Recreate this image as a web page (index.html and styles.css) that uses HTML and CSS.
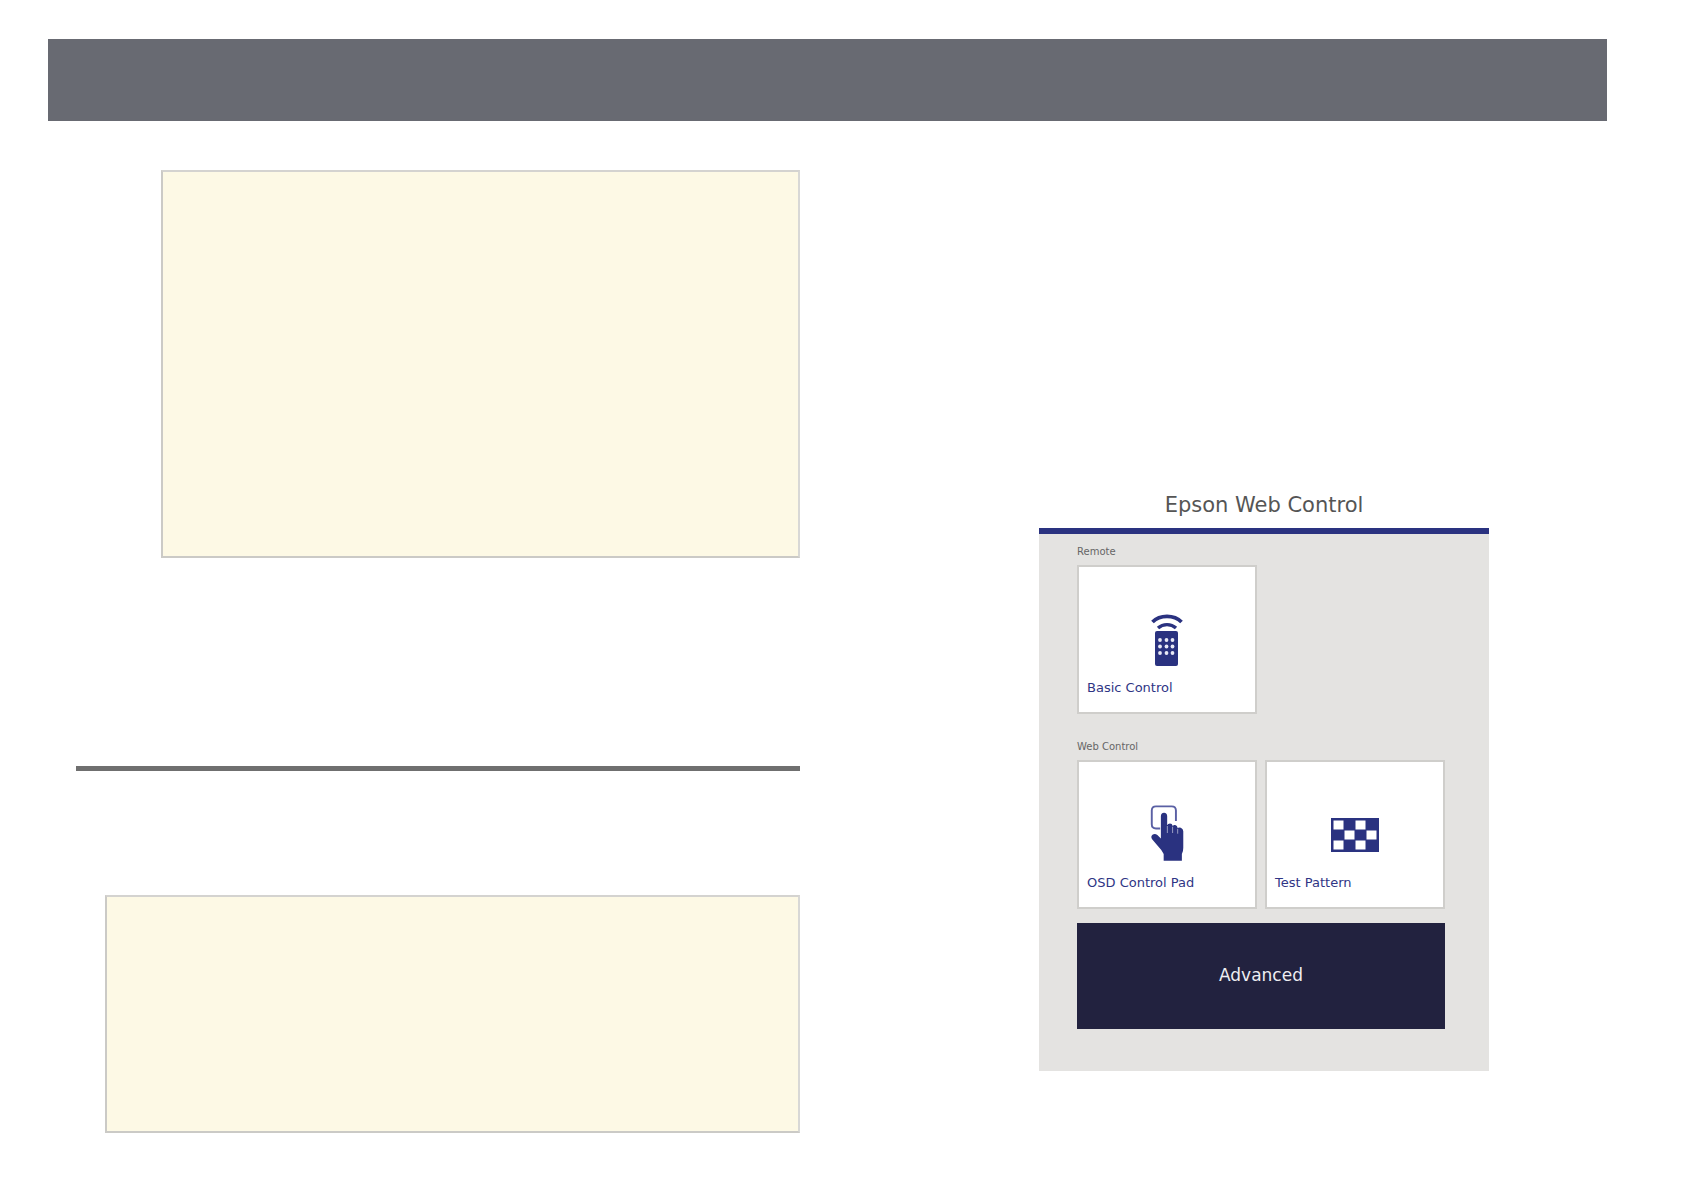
FILE: index.html
```html
<!DOCTYPE html>
<html lang="en">
<head>
<meta charset="utf-8">
<title>Epson Web Control</title>
<link rel="stylesheet" href="styles.css">
</head>
<body>
<header class="topbar"></header>
<main class="columns">
  <section class="left">
    <div class="note note-a"></div>
    <div class="rule"></div>
    <div class="note note-b"></div>
  </section>
  <section class="right">
    <h1 class="title">Epson Web Control</h1>
    <div class="panel">
      <div class="group-label">Remote</div>
      <div class="tiles">
        <div class="tile">
          <svg class="icon icon-remote" viewBox="0 0 36 60" aria-hidden="true">
            <path d="M3.500 14C11 6.500 25 6.500 32.500 14" fill="none" stroke="#2a3280" stroke-width="3.800"/>
            <path d="M9 20C14 15.500 22 15.500 27 20" fill="none" stroke="#2a3280" stroke-width="3.400"/>
            <rect x="6" y="23" width="23" height="35" rx="2" fill="#2a3280"/>
            <g fill="#e8e9f5">
              <circle cx="11" cy="32" r="1.900"/><circle cx="17.500" cy="32" r="1.900"/><circle cx="23.500" cy="32" r="1.900"/>
              <circle cx="11" cy="38.500" r="1.900"/><circle cx="17.500" cy="38.500" r="1.900"/><circle cx="23.500" cy="38.500" r="1.900"/>
              <circle cx="11" cy="45" r="1.900"/><circle cx="17.500" cy="45" r="1.900"/><circle cx="23.500" cy="45" r="1.900"/>
            </g>
          </svg>
          <span class="tile-label">Basic Control</span>
        </div>
      </div>
      <div class="group-label group-label-second">Web Control</div>
      <div class="tiles">
        <div class="tile">
          <svg class="icon icon-hand" viewBox="60 38 95 160" aria-hidden="true">
            <path d="M88 105H76Q64 105 64 93V54Q64 42 76 42H121Q133 42 133 54V84" fill="none" stroke="#5a60a4" stroke-width="5.500"/>
            <path d="M90 70Q90 60 99 60Q108 60 108 70V96Q110 91 116 91Q122 91 124 98Q126 94 131 95Q137 96 138 104Q141 101 147 103Q154 106 154 113V160Q154 172 150 178V197H98V178Q92 166 82 156L65 136Q60 128 66 123Q73 118 80 124L90 134Z" fill="#2a3280"/>
            <g fill="none" stroke="#fff" stroke-width="1.500">
              <path d="M108.500 98V118"/><path d="M123.500 100V118"/><path d="M138 106V120"/>
            </g>
          </svg>
          <span class="tile-label">OSD Control Pad</span>
        </div>
        <div class="tile">
          <svg class="icon icon-checker" viewBox="0 0 48 34" aria-hidden="true">
            <rect width="48" height="34" fill="#2a3280"/>
            <g fill="#fff">
              <rect x="2.500" y="2.500" width="10" height="9"/><rect x="24.500" y="2.500" width="10" height="9"/>
              <rect x="13.500" y="12.500" width="10" height="9"/><rect x="35.500" y="12.500" width="10" height="9"/>
              <rect x="2.500" y="22.500" width="10" height="9"/><rect x="24.500" y="22.500" width="10" height="9"/>
            </g>
          </svg>
          <span class="tile-label">Test Pattern</span>
        </div>
      </div>
      <div class="advanced">Advanced</div>
    </div>
  </section>
</main>
</body>
</html>
```
FILE: styles.css
```css
* {
  box-sizing: border-box;
}

html,
body {
  margin: 0;
  padding: 0;
  background: #fff;
}

body {
  width: 1684px;
  height: 1190px;
  overflow: hidden;
  font-family: "DejaVu Sans", "Noto Sans", sans-serif;
}

.topbar {
  height: 82px;
  margin: 39px 77px 0 48px;
  background: #686a72;
}

.columns {
  display: grid;
  grid-template-columns: 800px 450px;
  column-gap: 239px;
}

.left {
  display: flex;
  flex-direction: column;
  padding-top: 49px;
}

.note {
  background: #fdf9e5;
  border: 2px solid #cbcac6;
  border-top-color: #d4d3d0;
  border-right-color: #d8d8d6;
}

.note-a {
  height: 388px;
  margin-left: 161px;
}

.rule {
  height: 5px;
  margin: 208px 0 0 76px;
  background: #6f6f6f;
}

.note-b {
  height: 238px;
  margin: 124px 0 0 105px;
}

.right {
  display: flex;
  flex-direction: column;
  padding-top: 370px;
}

.title {
  margin: 0;
  height: 37px;
  font-size: 21px;
  line-height: 29px;
  font-weight: 400;
  color: #555;
  text-align: center;
}

.panel {
  height: 543px;
  padding: 12px 44px 0 38px;
  background: #e4e3e1;
  border-top: 6px solid #2a3280;
}

.group-label {
  height: 19px;
  font-size: 10px;
  line-height: 12px;
  color: #666;
}

.group-label-second {
  margin-top: 27px;
}

.tiles {
  display: flex;
  gap: 8px;
}

.tile {
  display: flex;
  flex-direction: column;
  position: relative;
  width: 180px;
  height: 149px;
  background: #fff;
  border: 2px solid #cfcecb;
}

.icon {
  align-self: center;
  flex: none;
}

.icon-remote {
  width: 36px;
  height: 60px;
  margin-top: 41px;
}

.icon-hand {
  width: 34px;
  height: 56px;
  margin-top: 43px;
}

.icon-checker {
  width: 48px;
  height: 34px;
  margin-top: 56px;
}

.tile-label {
  position: absolute;
  left: 8px;
  top: 112px;
  font-size: 13px;
  line-height: 18px;
  color: #2f3585;
  white-space: nowrap;
}

.advanced {
  display: flex;
  align-items: center;
  justify-content: center;
  width: 368px;
  height: 106px;
  margin-top: 14px;
  padding-bottom: 2px;
  background: #22223f;
  color: #eeeef2;
  font-size: 17px;
}
```
